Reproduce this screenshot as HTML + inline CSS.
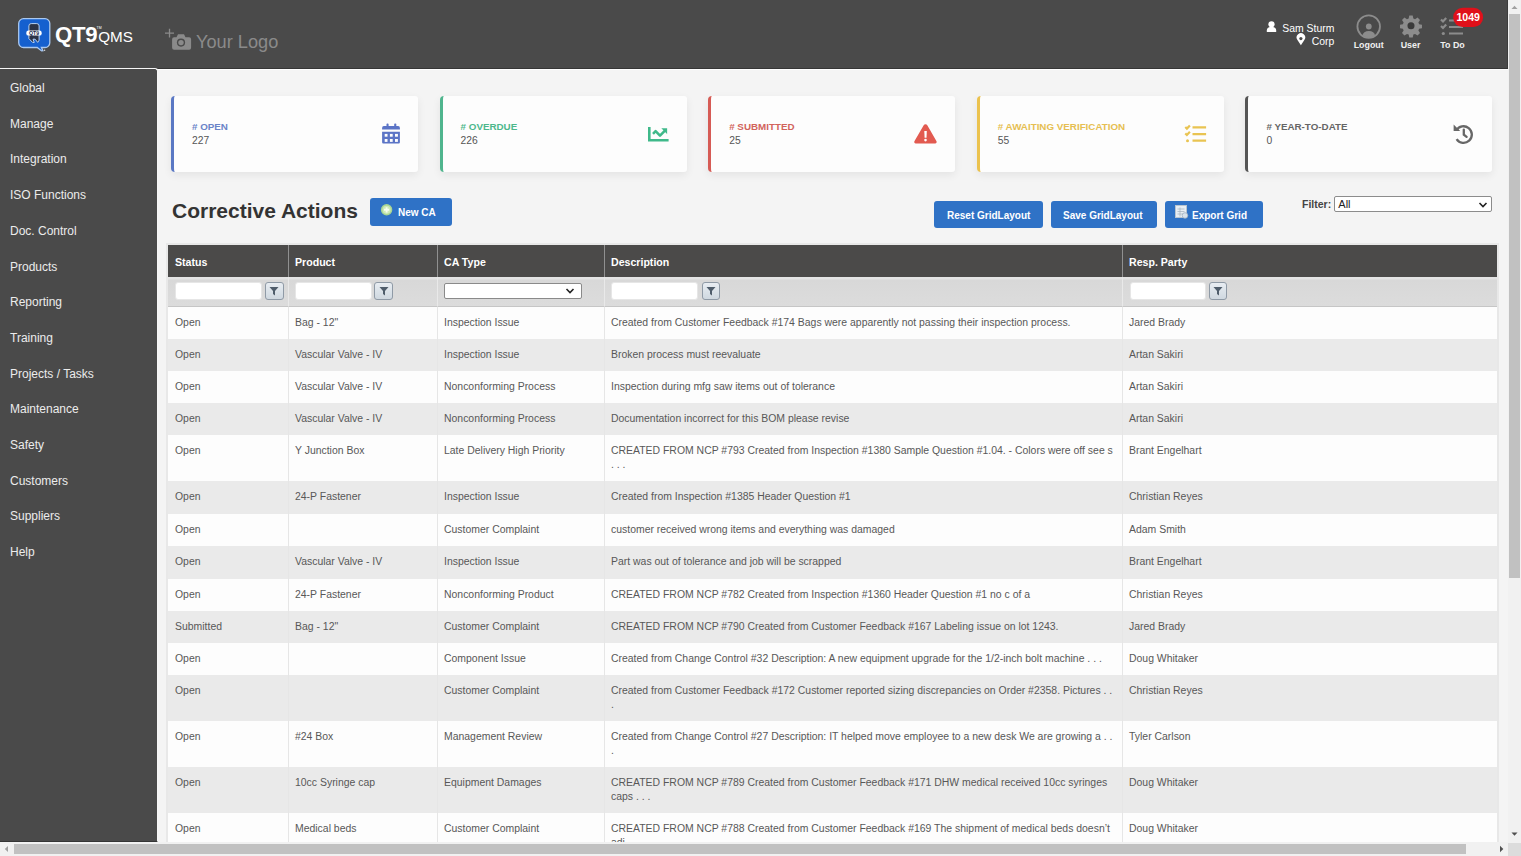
<!DOCTYPE html><html><head><meta charset="utf-8"><style>
*{box-sizing:border-box;margin:0;padding:0}
html,body{width:1521px;height:856px;overflow:hidden;background:#f4f4f4;font-family:"Liberation Sans",sans-serif}
#hdr{position:absolute;left:0;top:0;width:1508px;height:69px;background:#4a4a4a;border-bottom:1px solid #363636;box-shadow:inset -1px 0 #3c3c3c}
#wl{position:absolute;left:157px;top:69px;width:1351px;height:1px;background:#fff}
#side{position:absolute;left:0;top:68px;width:158px;height:774px;background:#4a4a4a;border-top:1px solid #f6f6f6;border-right:1px solid #f6f6f6;border-top-right-radius:3px;border-bottom:1px solid #353535}
#side div{position:absolute;left:10px;font-size:12px;color:#ececec;white-space:nowrap;line-height:14px}
.card{position:absolute;top:96px;width:247px;height:75.5px;background:#fdfdfd;border-left:3px solid;border-radius:4px 3px 3px 4px;box-shadow:0 3px 8px rgba(0,0,0,0.07)}
.card .lbl{position:absolute;left:18px;top:25px;font-size:9.8px;font-weight:bold;white-space:nowrap;line-height:12px}
.card .val{position:absolute;left:18px;top:39px;font-size:10.3px;color:#555;line-height:12px}
.card svg{position:absolute}
.btn{position:absolute;background:#2f72c6;border-radius:3px;color:#fff;font-weight:bold;font-size:10px;white-space:nowrap;line-height:12px}
.btn span{position:absolute}
#grid{position:absolute;left:168px;top:245px;width:1329px;height:597px;overflow:hidden;background:#fdfdfd}
#gridb{position:absolute;left:166px;top:243px;width:1333px;height:620px;border:2px solid #e8e8e8;border-bottom:none}
.gh{position:absolute;top:0;height:32px;background:#4b4a49;color:#fff;font-weight:bold;font-size:10.6px;line-height:12px;padding:11px 0 0 6px;border-left:1px solid #909090}
.gf{position:absolute;top:32px;height:30px;background:linear-gradient(#e4e4e4 0,#e4e4e4 2px,#d8d8d8 3px,#dcdcdc 100%);border-bottom:1px solid #c6c6c6;border-left:1px solid #e9e9e9}
.row{position:absolute;left:0;width:1329px}
.row div{position:absolute;top:0;height:100%;font-size:10.45px;color:#585858;line-height:14px;padding:9px 0 0 6px;white-space:nowrap;border-left:1px solid #e6e6e6}
.odd{background:#fdfdfd}
.even{background:#eaeaea}
.inp{position:absolute;top:37px;height:18px;background:#fff;border-radius:3px;border:1px solid #e6e6e6}
.fb{position:absolute;top:36.5px;width:18.6px;height:18.6px;border-radius:3px;border:1px solid #8f9aa6;background:linear-gradient(#e8edf2,#cfd8e0)}
.fb svg{position:absolute;left:3.3px;top:3.6px}
.sel{position:absolute;top:38px;height:16px;background:#fff;border:1px solid #8a8a8a;border-radius:2px}
</style></head><body>
<div id="hdr"></div><div id="wl"></div>
<svg style="position:absolute;left:0;top:0" width="300" height="69" viewBox="0 0 300 69"><path d="M23.5 18.7h21.5a4.8 4.8 0 0 1 4.8 4.8v19.2a4.8 4.8 0 0 1-4.8 4.8h-3.6l1.5 3.2-1.3.2-4.4-3.4h-13.7a4.8 4.8 0 0 1-4.8-4.8v-19.2a4.8 4.8 0 0 1 4.8-4.8z" fill="#1560cf" stroke="#a9c8f0" stroke-width="1.3"/><path d="M31.2 23.6h5.6a2.3 2.3 0 0 1 2.3 2.3v14.3l-1.4 2.2-2.6-3.2h-2.1l1.3 3.2-1.6.1-3.8-3.9v-12.7a2.3 2.3 0 0 1 2.3-2.3z" fill="#2b3346" stroke="#b8d3f5" stroke-width="1"/><rect x="26.3" y="30.6" width="15.4" height="5" rx="2.2" fill="#fff"/><text x="34" y="34.9" font-family="Liberation Sans" font-weight="bold" font-size="5.2" fill="#1a2a4a" text-anchor="middle">QT9</text><circle cx="44.6" cy="50.3" r="0.7" fill="#ddd"/><text x="55" y="41.8" font-family="Liberation Sans" font-weight="bold" font-size="22.2" fill="#fff" letter-spacing="-0.3">QT9</text><text x="98.2" y="41.8" font-family="Liberation Sans" font-size="15.2" fill="#fff" letter-spacing="0.1">QMS</text><text x="96.5" y="28.5" font-family="Liberation Sans" font-size="3.5" fill="#fff">TM</text><path d="M169.5 28.7v8.8M165 33.1h9" stroke="#8a8a8a" stroke-width="1.3"/><path d="M176.5 37.2l1.5-2.9h6l1.5 2.9h3.6a2 2 0 0 1 2 2v8.5a2 2 0 0 1-2 2h-15a2 2 0 0 1-2-2v-8.5a2 2 0 0 1 2-2z" fill="#8a8a8a"/><circle cx="181" cy="42.6" r="4.1" fill="#4a4a4a"/><circle cx="181" cy="42.6" r="2.7" fill="#8a8a8a"/><text x="196" y="48.2" font-family="Liberation Sans" font-size="18.2" fill="#8a8a8a">Your Logo</text></svg>
<svg style="position:absolute;left:1250px;top:0" width="258" height="69" viewBox="1250 0 258 69"><circle cx="1271.5" cy="24.3" r="3.1" fill="#fff"/><path d="M1266.8 32v-1.6c0-2 1.6-3.4 3.4-3.4h2.6c1.8 0 3.4 1.4 3.4 3.4v1.6z" fill="#fff"/><path d="M1300.9 45.2l-3.6-5.4a4.3 4.3 0 1 1 7.2 0z" fill="#fff"/><circle cx="1300.9" cy="38.6" r="1.6" fill="#4a4a4a"/><text x="1334.3" y="31.6" font-family="Liberation Sans" font-size="10.4" fill="#fff" text-anchor="end">Sam Sturm</text><text x="1334.3" y="44.6" font-family="Liberation Sans" font-size="10.4" fill="#fff" text-anchor="end">Corp</text><circle cx="1368.7" cy="26.6" r="11.3" fill="none" stroke="#8c8c8c" stroke-width="1.8"/><circle cx="1368.8" cy="26.5" r="2.9" fill="#8c8c8c"/><path d="M1362.6 35.6a6.2 4.6 0 0 1 12.4 0a10 10 0 0 1-12.4 0z" fill="#8c8c8c"/><text x="1368.7" y="48.3" font-family="Liberation Sans" font-weight="bold" font-size="8.9" fill="#f0f0f0" text-anchor="middle">Logout</text><g transform="translate(1411,25.7) scale(0.9)" fill="#8c8c8c"><path d="M-1.9-11.3h3.8l.7 3.2 1.9.8 2.8-1.8 2.7 2.7-1.8 2.8.8 1.9 3.2.7v3.8l-3.2.7-.8 1.9 1.8 2.8-2.7 2.7-2.8-1.8-1.9.8-.7 3.2h-3.8l-.7-3.2-1.9-.8-2.8 1.8-2.7-2.7 1.8-2.8-.8-1.9-3.2-.7v-3.8l3.2-.7.8-1.9-1.8-2.8 2.7-2.7 2.8 1.8 1.9-.8z"/><circle r="3.9" fill="#3a3a3a"/></g><text x="1410.5" y="48.3" font-family="Liberation Sans" font-weight="bold" font-size="8.9" fill="#f0f0f0" text-anchor="middle">User</text><g stroke="#8c8c8c" stroke-width="2.2" fill="none"><path d="M1441 19.5l2 2 3.2-3.5M1441 26l2 2 3.2-3.5"/><path d="M1449 20.5h14M1449 27h14M1449 33.5h14"/></g><circle cx="1443.3" cy="33.5" r="1.6" fill="#8c8c8c"/><text x="1452.5" y="48.3" font-family="Liberation Sans" font-weight="bold" font-size="8.9" fill="#f0f0f0" text-anchor="middle">To Do</text><rect x="1453.2" y="7.8" width="29.9" height="19.3" rx="9.6" fill="#e0101a"/><text x="1468.2" y="20.8" font-family="Liberation Sans" font-weight="bold" font-size="10.6" fill="#fff" text-anchor="middle">1049</text></svg>
<div id="side">
<div style="top:12.0px">Global</div>
<div style="top:47.7px">Manage</div>
<div style="top:83.4px">Integration</div>
<div style="top:119.1px">ISO Functions</div>
<div style="top:154.8px">Doc. Control</div>
<div style="top:190.5px">Products</div>
<div style="top:226.2px">Reporting</div>
<div style="top:261.9px">Training</div>
<div style="top:297.6px">Projects / Tasks</div>
<div style="top:333.3px">Maintenance</div>
<div style="top:369.0px">Safety</div>
<div style="top:404.7px">Customers</div>
<div style="top:440.4px">Suppliers</div>
<div style="top:476.1px">Help</div>
</div>
<div class="card" style="left:171.0px;border-left-color:#5a78c4"><div class="lbl" style="color:#6a84c8"># OPEN</div><div class="val">227</div></div>
<div class="card" style="left:439.6px;border-left-color:#50b58e"><div class="lbl" style="color:#4db88c"># OVERDUE</div><div class="val">226</div></div>
<div class="card" style="left:708.2px;border-left-color:#d65b55"><div class="lbl" style="color:#d2645c"># SUBMITTED</div><div class="val">25</div></div>
<div class="card" style="left:976.8px;border-left-color:#ebc24e"><div class="lbl" style="color:#e6bf52"># AWAITING VERIFICATION</div><div class="val">55</div></div>
<div class="card" style="left:1245.4px;border-left-color:#555555"><div class="lbl" style="color:#666666"># YEAR-TO-DATE</div><div class="val">0</div></div>
<svg style="position:absolute;left:0;top:0" width="1508" height="190" viewBox="0 0 1508 190">
<g fill="#5b74c6"><path d="M382.1 129.5v-1.6a1.8 1.8 0 0 1 1.8-1.8h14.2a1.8 1.8 0 0 1 1.8 1.8v1.6z"/><rect x="386.5" y="123.6" width="2.1" height="3.5" rx="0.8"/><rect x="394.2" y="123.6" width="2.1" height="3.5" rx="0.8"/>
<path d="M382.1 131.8h17.8v10.5a1.2 1.2 0 0 1-1.2 1.2h-15.4a1.2 1.2 0 0 1-1.2-1.2z"/></g>
<g fill="#fdfdfd"><rect x="384.7" y="133.9" width="2.8" height="2.8"/><rect x="389.9" y="133.9" width="2.8" height="2.8"/><rect x="395" y="133.9" width="2.9" height="2.8"/><rect x="384.7" y="139" width="2.8" height="2.9"/><rect x="389.9" y="139" width="2.8" height="2.9"/><rect x="395" y="139" width="2.9" height="2.9"/></g>
<g fill="none" stroke="#3fb98a" stroke-width="2.6"><path d="M649.3 126.9v13.4h19.3"/><path d="M653 133.8l2.6-2.6 4.4 4.4 5.2-5.2" stroke-linejoin="round"/></g>
<path d="M661.3 128.2h5.8v5.8z" fill="#3fb98a"/>
<path d="M925.5 124.2c.8 0 1.4.4 1.8 1.1l9.2 16c.5.9-.2 2.2-1.3 2.2h-19.5c-1.1 0-1.8-1.3-1.3-2.2l9.3-16c.4-.7 1-1.1 1.8-1.1z" fill="#e25a50"/>
<path d="M924.3 131h2.5l-.3 6.7h-1.9z" fill="#fff"/><circle cx="925.5" cy="140.1" r="1.3" fill="#fff"/>
<g fill="none" stroke="#e9c452" stroke-width="2.2"><path d="M1185.3 127l1.6 1.6 3-3.2M1185.3 133.4l1.6 1.6 3-3.2"/><path d="M1192.5 127.3h13.6M1192.5 134.2h13.6M1192.5 140.7h13.6"/></g><circle cx="1187.5" cy="140.7" r="1.5" fill="#e9c452"/>
<g fill="none" stroke="#676767" stroke-width="2.3"><path d="M1456.3 130.5a8.3 8.3 0 1 1 .3 8.6"/><path d="M1463.8 129.6v5l2.8 2.2" stroke-linecap="round"/></g>
<path d="M1453.6 124.5v6.5h6.6z" fill="#676767"/>
</svg>
<div style="position:absolute;left:172px;top:199px;font-size:21px;font-weight:bold;color:#333;white-space:nowrap;line-height:24px">Corrective Actions</div>
<div class="btn" style="left:370px;top:198px;width:82px;height:28px"><span style="left:28px;top:9px">New CA</span></div>
<svg style="position:absolute;left:380px;top:203px" width="14" height="14" viewBox="0 0 14 14"><circle cx="6.6" cy="6.8" r="5.7" fill="#a9d693"/><circle cx="6.6" cy="6.8" r="4.1" fill="#cdeab8"/><path d="M6.6 4.2v5.2M4 6.8h5.2" stroke="#f6fff0" stroke-width="1.9"/></svg>
<div class="btn" style="left:934px;top:201px;width:109px;height:27px"><span style="left:13px;top:9px">Reset GridLayout</span></div>
<div class="btn" style="left:1051px;top:201px;width:106px;height:27px"><span style="left:12px;top:9px">Save GridLayout</span></div>
<div class="btn" style="left:1165px;top:201px;width:98px;height:27px"><span style="left:27px;top:9px">Export Grid</span></div>
<svg style="position:absolute;left:1175px;top:205px" width="14" height="14" viewBox="0 0 14 14"><rect x="0.5" y="0.5" width="11" height="12" fill="#e8eef4" stroke="#b8c4cf" stroke-width="1"/><path d="M2.5 4h7M2.5 6.5h7M2.5 9h7M5 2.5v9" stroke="#a9b6c2" stroke-width="0.8"/><circle cx="10" cy="10.5" r="2.8" fill="#d9e3ec" stroke="#9fb0c0" stroke-width="0.8"/></svg>
<div style="position:absolute;left:1302px;top:198px;font-size:10.5px;font-weight:bold;color:#444;line-height:12px">Filter:</div>
<div style="position:absolute;left:1334.3px;top:196.3px;width:158px;height:16px;background:#fff;border:1px solid #8c8c8c;border-radius:2px;font-size:11px;color:#222;padding:1px 0 0 3px;line-height:12px">All</div>
<svg style="position:absolute;left:1478px;top:201px" width="10" height="8" viewBox="0 0 10 8"><path d="M1.5 2l3.5 3.5L8.5 2" fill="none" stroke="#222" stroke-width="1.6"/></svg>
<div id="gridb"></div><div id="grid">
<div class="gh" style="left:-1px;width:121px;padding-left:7px">Status</div>
<div class="gf" style="left:-1px;width:121px"></div>
<div class="gh" style="left:120px;width:149px">Product</div>
<div class="gf" style="left:120px;width:149px"></div>
<div class="gh" style="left:269px;width:167px">CA Type</div>
<div class="gf" style="left:269px;width:167px"></div>
<div class="gh" style="left:436px;width:518px">Description</div>
<div class="gf" style="left:436px;width:518px"></div>
<div class="gh" style="left:954px;width:375px">Resp. Party</div>
<div class="gf" style="left:954px;width:375px"></div>
<div class="inp" style="left:7.0px;width:87.0px"></div>
<div class="fb" style="left:97.2px"><svg width="10" height="10" viewBox="0 0 10 10"><path d="M0.5 1h9L6 5v4.5L4 8V5z" fill="#4f5d6b"/></svg></div>
<div class="inp" style="left:127.4px;width:76.3px"></div>
<div class="fb" style="left:206.3px"><svg width="10" height="10" viewBox="0 0 10 10"><path d="M0.5 1h9L6 5v4.5L4 8V5z" fill="#4f5d6b"/></svg></div>
<div class="sel" style="left:275.5px;width:138px"></div>
<svg style="position:absolute;left:397px;top:42px" width="10" height="8" viewBox="0 0 10 8"><path d="M1.5 2l3.5 3.5L8.5 2" fill="none" stroke="#222" stroke-width="1.6"/></svg>
<div class="inp" style="left:443.2px;width:86.4px"></div>
<div class="fb" style="left:533.8px"><svg width="10" height="10" viewBox="0 0 10 10"><path d="M0.5 1h9L6 5v4.5L4 8V5z" fill="#4f5d6b"/></svg></div>
<div class="inp" style="left:961.8px;width:76.3px"></div>
<div class="fb" style="left:1040.5px"><svg width="10" height="10" viewBox="0 0 10 10"><path d="M0.5 1h9L6 5v4.5L4 8V5z" fill="#4f5d6b"/></svg></div>
<div class="row odd" style="top:62.00px;height:32.10px">
<div style="left:-1px;width:121px;padding-left:7px">Open</div>
<div style="left:120px;width:149px">Bag - 12&quot;</div>
<div style="left:269px;width:167px">Inspection Issue</div>
<div style="left:436px;width:518px">Created from Customer Feedback #174 Bags were apparently not passing their inspection process.</div>
<div style="left:954px;width:375px">Jared Brady</div>
</div>
<div class="row even" style="top:94.10px;height:32.10px">
<div style="left:-1px;width:121px;padding-left:7px">Open</div>
<div style="left:120px;width:149px">Vascular Valve - IV</div>
<div style="left:269px;width:167px">Inspection Issue</div>
<div style="left:436px;width:518px">Broken process must reevaluate</div>
<div style="left:954px;width:375px">Artan Sakiri</div>
</div>
<div class="row odd" style="top:126.20px;height:32.10px">
<div style="left:-1px;width:121px;padding-left:7px">Open</div>
<div style="left:120px;width:149px">Vascular Valve - IV</div>
<div style="left:269px;width:167px">Nonconforming Process</div>
<div style="left:436px;width:518px">Inspection during mfg saw items out of tolerance</div>
<div style="left:954px;width:375px">Artan Sakiri</div>
</div>
<div class="row even" style="top:158.30px;height:32.10px">
<div style="left:-1px;width:121px;padding-left:7px">Open</div>
<div style="left:120px;width:149px">Vascular Valve - IV</div>
<div style="left:269px;width:167px">Nonconforming Process</div>
<div style="left:436px;width:518px">Documentation incorrect for this BOM please revise</div>
<div style="left:954px;width:375px">Artan Sakiri</div>
</div>
<div class="row odd" style="top:190.40px;height:46.00px">
<div style="left:-1px;width:121px;padding-left:7px">Open</div>
<div style="left:120px;width:149px">Y Junction Box</div>
<div style="left:269px;width:167px">Late Delivery High Priority</div>
<div style="left:436px;width:518px">CREATED FROM NCP #793 Created from Inspection #1380 Sample Question #1.04. - Colors were off see s<br>. . .</div>
<div style="left:954px;width:375px">Brant Engelhart</div>
</div>
<div class="row even" style="top:236.40px;height:32.40px">
<div style="left:-1px;width:121px;padding-left:7px">Open</div>
<div style="left:120px;width:149px">24-P Fastener</div>
<div style="left:269px;width:167px">Inspection Issue</div>
<div style="left:436px;width:518px">Created from Inspection #1385 Header Question #1</div>
<div style="left:954px;width:375px">Christian Reyes</div>
</div>
<div class="row odd" style="top:268.80px;height:32.40px">
<div style="left:-1px;width:121px;padding-left:7px">Open</div>
<div style="left:120px;width:149px"></div>
<div style="left:269px;width:167px">Customer Complaint</div>
<div style="left:436px;width:518px">customer received wrong items and everything was damaged</div>
<div style="left:954px;width:375px">Adam Smith</div>
</div>
<div class="row even" style="top:301.20px;height:32.40px">
<div style="left:-1px;width:121px;padding-left:7px">Open</div>
<div style="left:120px;width:149px">Vascular Valve - IV</div>
<div style="left:269px;width:167px">Inspection Issue</div>
<div style="left:436px;width:518px">Part was out of tolerance and job will be scrapped</div>
<div style="left:954px;width:375px">Brant Engelhart</div>
</div>
<div class="row odd" style="top:333.60px;height:32.40px">
<div style="left:-1px;width:121px;padding-left:7px">Open</div>
<div style="left:120px;width:149px">24-P Fastener</div>
<div style="left:269px;width:167px">Nonconforming Product</div>
<div style="left:436px;width:518px">CREATED FROM NCP #782 Created from Inspection #1360 Header Question #1 no c of a</div>
<div style="left:954px;width:375px">Christian Reyes</div>
</div>
<div class="row even" style="top:366.00px;height:31.60px">
<div style="left:-1px;width:121px;padding-left:7px">Submitted</div>
<div style="left:120px;width:149px">Bag - 12&quot;</div>
<div style="left:269px;width:167px">Customer Complaint</div>
<div style="left:436px;width:518px">CREATED FROM NCP #790 Created from Customer Feedback #167 Labeling issue on lot 1243.</div>
<div style="left:954px;width:375px">Jared Brady</div>
</div>
<div class="row odd" style="top:397.60px;height:32.20px">
<div style="left:-1px;width:121px;padding-left:7px">Open</div>
<div style="left:120px;width:149px"></div>
<div style="left:269px;width:167px">Component Issue</div>
<div style="left:436px;width:518px">Created from Change Control #32 Description: A new equipment upgrade for the 1/2-inch bolt machine . . .</div>
<div style="left:954px;width:375px">Doug Whitaker</div>
</div>
<div class="row even" style="top:429.80px;height:45.90px">
<div style="left:-1px;width:121px;padding-left:7px">Open</div>
<div style="left:120px;width:149px"></div>
<div style="left:269px;width:167px">Customer Complaint</div>
<div style="left:436px;width:518px">Created from Customer Feedback #172 Customer reported sizing discrepancies on Order #2358. Pictures . .<br>.</div>
<div style="left:954px;width:375px">Christian Reyes</div>
</div>
<div class="row odd" style="top:475.70px;height:46.10px">
<div style="left:-1px;width:121px;padding-left:7px">Open</div>
<div style="left:120px;width:149px">#24 Box</div>
<div style="left:269px;width:167px">Management Review</div>
<div style="left:436px;width:518px">Created from Change Control #27 Description: IT helped move employee to a new desk We are growing a . .<br>.</div>
<div style="left:954px;width:375px">Tyler Carlson</div>
</div>
<div class="row even" style="top:521.80px;height:46.10px">
<div style="left:-1px;width:121px;padding-left:7px">Open</div>
<div style="left:120px;width:149px">10cc Syringe cap</div>
<div style="left:269px;width:167px">Equipment Damages</div>
<div style="left:436px;width:518px">CREATED FROM NCP #789 Created from Customer Feedback #171 DHW medical received 10cc syringes<br>caps . . .</div>
<div style="left:954px;width:375px">Doug Whitaker</div>
</div>
<div class="row odd" style="top:567.90px;height:46.10px">
<div style="left:-1px;width:121px;padding-left:7px">Open</div>
<div style="left:120px;width:149px">Medical beds</div>
<div style="left:269px;width:167px">Customer Complaint</div>
<div style="left:436px;width:518px">CREATED FROM NCP #788 Created from Customer Feedback #169 The shipment of medical beds doesn&#8217;t<br>adi...</div>
<div style="left:954px;width:375px">Doug Whitaker</div>
</div>
</div>
<div style="position:absolute;left:1508px;top:0;width:13px;height:843px;background:#f1f1f1"></div>
<div style="position:absolute;left:1509px;top:14px;width:11px;height:564px;background:#c1c1c1"></div>
<div style="position:absolute;left:0;top:842px;width:1508px;height:14px;background:#f1f1f1"></div>
<div style="position:absolute;left:14px;top:844px;width:1452px;height:10px;background:#c1c1c1"></div>
<div style="position:absolute;left:1508px;top:843px;width:13px;height:13px;background:#dcdcdc"></div>
<svg style="position:absolute;left:0;top:0" width="1521" height="856" viewBox="0 0 1521 856"><path d="M1511.5 9l3-3.3 3 3.3z" fill="#a0a0a0"/><path d="M1511.5 832.5l3 3.2 3-3.2z" fill="#505050"/><path d="M4.8 849l3.2-3.1 0 6.2z" fill="#a0a0a0"/><path d="M1500 845.8l3.3 3.2-3.3 3.2z" fill="#505050"/></svg>
</body></html>
